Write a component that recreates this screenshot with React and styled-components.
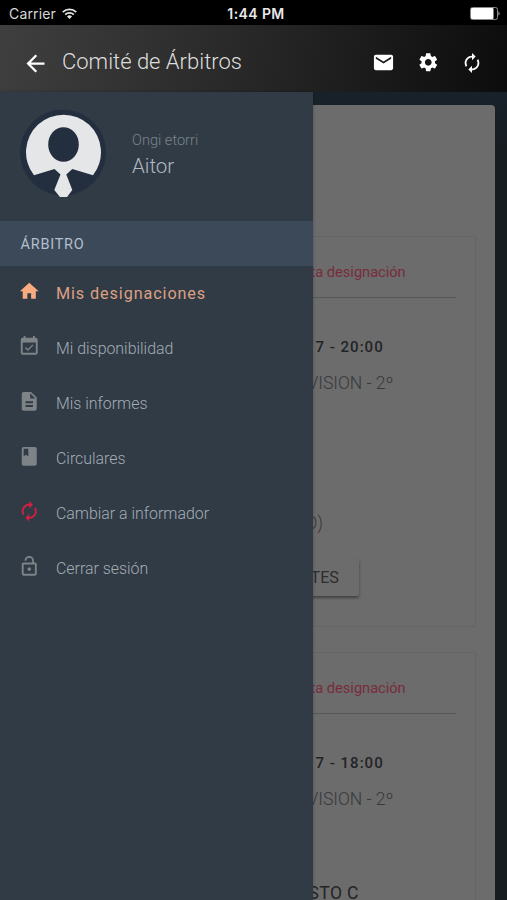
import React from 'react';
import styled, { createGlobalStyle } from 'styled-components';
import {
	MdArrowBack,
	MdEmail,
	MdSettings,
	MdAutorenew,
	MdHome,
	MdEventAvailable,
	MdDescription,
	MdClass,
	MdLockOpen
} from 'react-icons/md';

const GlobalStyle = createGlobalStyle`
	* { box-sizing: border-box; }
	body {
		margin: 0;
		background: #181d22;
		font-family: Roboto, sans-serif;
	}
`;

const Screen = styled.div`
	width: 507px;
	height: 900px;
	display: flex;
	flex-direction: column;
	overflow: hidden;
`;

const StatusBar = styled.div`
	height: 25px;
	flex: none;
	padding: 2px 7px 0 9px;
	display: grid;
	grid-template-columns: 1fr auto 1fr;
	align-items: center;
	background: #000;
	color: #d8d8d8;
	font-family: Inter, sans-serif;
	font-size: 14px;
`;

const Carrier = styled.div`
	display: flex;
	align-items: center;
	gap: 6px;
	letter-spacing: 0.15px;
`;

const Clock = styled.div`
	padding-left: 3px;
	font-weight: 600;
	font-size: 14px;
	letter-spacing: 0.4px;
	color: #e8e8e8;
`;

const BatteryIcon = styled.svg`
	justify-self: end;
`;

const Header = styled.header`
	height: 67px;
	flex: none;
	padding: 8px 24px 0 22px;
	display: flex;
	align-items: center;
	color: #fff;
	background: linear-gradient(100deg, #3f3f3f 0%, #262626 52%, #0c0c0c 100%);

	svg:first-child {
		margin-top: 2px;
	}
`;

const Title = styled.h1`
	flex: 1;
	margin: -3px 0 0 13px;
	font-size: 22px;
	font-weight: 300;
	color: #dedede;
`;

const Actions = styled.div`
	display: flex;
	align-items: center;
	gap: 22px;

	svg {
		margin-top: 0 !important;
	}
`;

const Main = styled.div`
	flex: 1;
	display: flex;
	min-height: 0;
`;

const Drawer = styled.aside`
	position: relative;
	z-index: 1;
	width: 312.5px;
	flex: none;
	background: #303b46;
	box-shadow: 0 0 3px rgba(0, 0, 0, 0.25);
`;

const Profile = styled.div`
	height: 129px;
	padding: 17px 20px 0;
	display: flex;
	gap: 26px;
`;

const Greeting = styled.div`
	padding-top: 21px;
	font-weight: 300;
`;

const Welcome = styled.div`
	font-size: 14.6px;
	line-height: 20px;
	color: #7b838b;
`;

const UserName = styled.div`
	margin-top: 1px;
	font-size: 20.5px;
	line-height: 30px;
	color: #b0b9c2;
`;

const SectionTitle = styled.div`
	height: 45px;
	padding-left: 20.5px;
	line-height: 47px;
	font-size: 14.5px;
	letter-spacing: 0.75px;
	color: #b3bfcc;
	background: #3b4959;
`;

const Menu = styled.nav`
	display: flex;
	flex-direction: column;
`;

const MenuItem = styled.a`
	height: 55px;
	padding-left: 17.5px;
	display: flex;
	gap: 16px;
	align-items: center;
	font-size: ${(props) => (props.$active ? '16.2px' : '15.9px')};
	font-weight: ${(props) => (props.$active ? 400 : 300)};
	letter-spacing: ${(props) => (props.$active ? '0.9px' : '0')};
	color: ${(props) => (props.$active ? '#dda081' : '#a4acb4')};

	svg {
		margin-top: -5px;
		color: ${(props) => props.$iconColor || '#7e8388'};
	}
`;

const Content = styled.main`
	flex: 1;
	min-width: 0;
	padding: 13px 12px 0 0;
	overflow: hidden;
	background: linear-gradient(#18222a, #171c21 60px);
`;

const Sheet = styled.div`
	height: 900px;
	padding: 131px 19px 0 0;
	border-radius: 0 4px 0 0;
	background: #6c6c6c;
`;

const Card = styled.section`
	height: 391px;
	margin-bottom: 25px;
	padding: 22px 19px 0 0;
	border: 1px solid #656565;
	border-left: 0;
`;

const Notice = styled.div`
	height: 39px;
	margin-left: -4px;
	padding-left: 2px;
	border-bottom: 1px solid #52585a;
	line-height: 27px;
	font-size: 14.6px;
	color: #792b3d;
`;

const DateTime = styled.div`
	margin: 37px 0 0 3px;
	font-size: 15px;
	line-height: 24px;
	font-weight: 500;
	letter-spacing: 1px;
	color: #222427;
`;

const Category = styled.div`
	margin: 12px 0 0 -5px;
	font-size: 17.5px;
	line-height: 24px;
	font-weight: 300;
	color: #36393b;
`;

const Place = styled.div`
	margin: 116px 0 0 -7px;
	font-size: 17.5px;
	line-height: 24px;
	font-weight: 300;
	color: #36393b;
`;

const CardButton = styled.button`
	display: block;
	width: 60px;
	height: 37px;
	margin: 24px 0 0 -14px;
	padding: 0 0 0 12px;
	border: 0;
	border-radius: 2px;
	background: #6c6c6c;
	box-shadow: 0 2px 3px rgba(0, 0, 0, 0.4);
	font-family: inherit;
	font-size: 16.2px;
	text-align: left;
	color: #2b2d2f;
`;

const Team = styled.div`
	margin: 70px 0 0 -4px;
	font-size: 17.5px;
	line-height: 24px;
	letter-spacing: 0.4px;
	color: #222427;
`;

const menuItems = [
	{ label: 'Mis designaciones', icon: MdHome, iconColor: '#f9ab80', active: true },
	{ label: 'Mi disponibilidad', icon: MdEventAvailable },
	{ label: 'Mis informes', icon: MdDescription },
	{ label: 'Circulares', icon: MdClass },
	{ label: 'Cambiar a informador', icon: MdAutorenew, iconColor: '#d2213f' },
	{ label: 'Cerrar sesión', icon: MdLockOpen }
];

const Wifi = () => (
	<svg width="15" height="11" viewBox="0 0 15 11" fill="none" stroke="#e6e6e6" strokeWidth="1.8">
		<path d="M0.8 4.1a9.6 9.6 0 0 1 13.4 0M3.2 6.6a6.2 6.2 0 0 1 8.6 0" />
		<path d="M7.5 11 5 8.5a3.6 3.6 0 0 1 5 0z" fill="#e6e6e6" stroke="none" />
	</svg>
);

const Battery = () => (
	<BatteryIcon width="30" height="13" viewBox="0 0 30 13">
		<rect x="0.5" y="0.5" width="27" height="12" rx="2" fill="none" stroke="#8c8c8c" />
		<rect x="1" y="1" width="22.5" height="11" rx="1" fill="#fff" />
		<path d="M28.5 4.3c1.4.8 1.4 3.6 0 4.4z" fill="#b5b5b5" />
	</BatteryIcon>
);

const Avatar = () => (
	<svg width="86" height="90" viewBox="0 0 86 90">
		<circle cx="43" cy="43.5" r="43" fill="#232f3e" />
		<path
			d="M14 66.3A37.5 37.5 0 1 1 73 66.3L52.3 60 46.3 65.500 52.300 81 47 88H40L34.300 81 40.500 65.500 34.500 60Z"
			fill="#e5e6e7"
		/>
		<ellipse cx="43.5" cy="35.5" rx="15.3" ry="17.2" fill="#232f3e" />
	</svg>
);

const Designation = ({ time, children }) => (
	<Card>
		<Notice>ta designación</Notice>
		<DateTime>7 - {time}</DateTime>
		<Category>VISION - 2º</Category>
		{children}
	</Card>
);

const App = () => {
	return (
		<Screen>
			<GlobalStyle />
			<StatusBar>
				<Carrier>
					Carrier
					<Wifi />
				</Carrier>
				<Clock>1:44 PM</Clock>
				<Battery />
			</StatusBar>
			<Header>
				<MdArrowBack size={27} />
				<Title>Comité de Árbitros</Title>
				<Actions>
					<MdEmail size={23} />
					<MdSettings size={22.5} />
					<MdAutorenew size={22} />
				</Actions>
			</Header>
			<Main>
				<Drawer>
					<Profile>
						<Avatar />
						<Greeting>
							<Welcome>Ongi etorri</Welcome>
							<UserName>Aitor</UserName>
						</Greeting>
					</Profile>
					<SectionTitle>ÁRBITRO</SectionTitle>
					<Menu>
						{menuItems.map(({ label, icon: Icon, iconColor, active }) => (
							<MenuItem key={label} $active={active} $iconColor={iconColor}>
								<Icon size={22.5} />
								{label}
							</MenuItem>
						))}
					</Menu>
				</Drawer>
				<Content>
					<Sheet>
						<Designation time="20:00">
							<Place>O)</Place>
							<CardButton>TES</CardButton>
						</Designation>
						<Designation time="18:00">
							<Team>STO C</Team>
						</Designation>
					</Sheet>
				</Content>
			</Main>
		</Screen>
	);
};

export default App;
